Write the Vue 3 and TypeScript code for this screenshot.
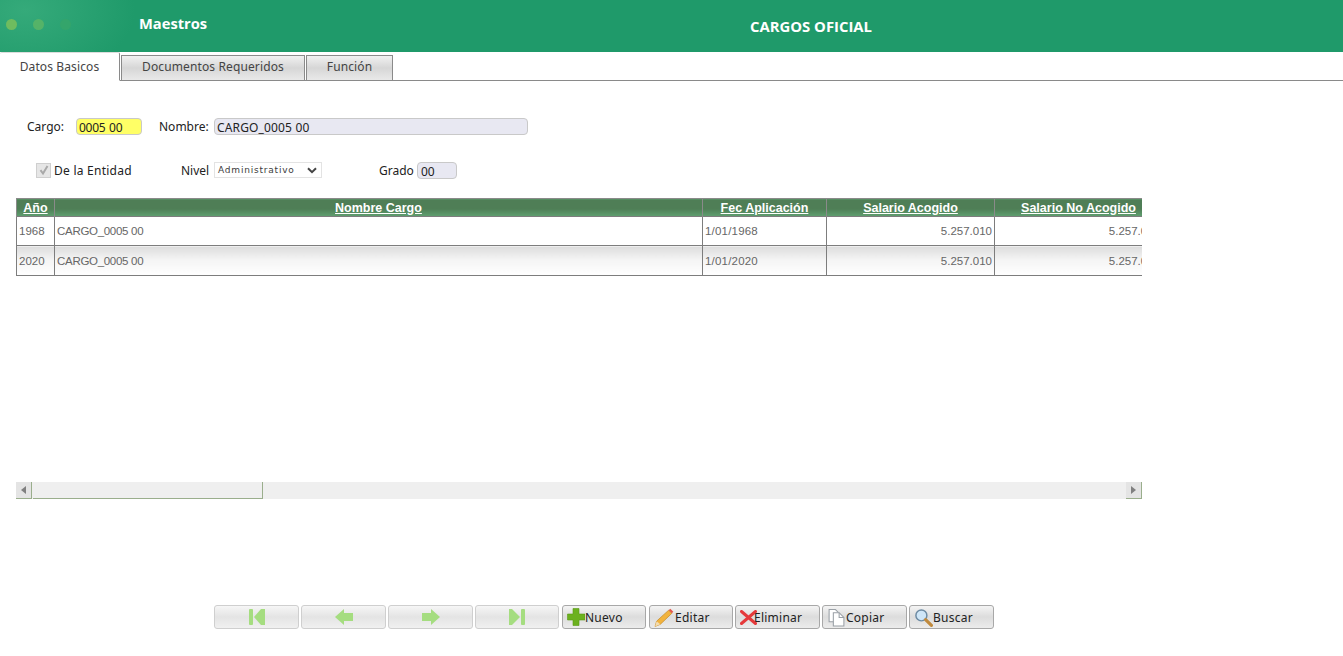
<script setup lang="ts">
interface Row { year: string; name: string; date: string; a: string; b: string }
const rows: Row[] = [
  { year: '1968', name: 'CARGO_0005 00', date: '1/01/1968', a: '5.257.010', b: '5.257.010' },
  { year: '2020', name: 'CARGO_0005 00', date: '1/01/2020', a: '5.257.010', b: '5.257.010' },
]
const heads = ['Año', 'Nombre Cargo', 'Fec Aplicación', 'Salario Acogido', 'Salario No Acogido']
const tabs = ['Datos Basicos', 'Documentos Requeridos', 'Función']
</script>

<template>
  <div class="page">
    <header class="top">
      <div class="glow">
        <span class="dot d1"></span><span class="dot d2"></span><span class="dot d3"></span>
      </div>
      <div class="section">Maestros</div>
      <div class="title">CARGOS OFICIAL</div>
    </header>

    <nav class="tabs">
      <div v-for="(t, i) in tabs" :key="t" class="tab" :class="['t' + i, { active: i === 0 }]">{{ t }}</div>
    </nav>

    <section class="row r1">
      <label class="l-cargo">Cargo:</label>
      <div class="field cargo">0005 00</div>
      <label class="l-nombre">Nombre:</label>
      <div class="field nombre">CARGO_0005 00</div>
    </section>

    <section class="row r2">
      <span class="check">
        <svg width="14" height="14" viewBox="0 0 14 14">
          <path d="M3.5 7.2 L6 10.5 L10.5 3" fill="none" stroke="#a9a9a9" stroke-width="2" />
        </svg>
      </span>
      <label class="l-ent">De la Entidad</label>
      <label class="l-nivel">Nivel</label>
      <div class="select">
        <span>Administrativo</span>
        <svg width="10" height="7" viewBox="0 0 10 7"><path d="M1 1.2 L5 5.2 L9 1.2" fill="none" stroke="#444" stroke-width="2" /></svg>
      </div>
      <label class="l-grado">Grado</label>
      <div class="field grado">00</div>
    </section>

    <section class="grid-wrap">
      <table class="grid">
        <colgroup>
          <col style="width:38px" /><col style="width:648px" /><col style="width:124px" /><col style="width:168px" /><col style="width:168px" />
        </colgroup>
        <thead>
          <tr><th v-for="h in heads" :key="h"><a>{{ h }}</a></th></tr>
        </thead>
        <tbody>
          <tr v-for="(r, i) in rows" :key="r.year" :class="{ alt: i === 1 }">
            <td>{{ r.year }}</td>
            <td class="name">{{ r.name }}</td>
            <td class="date">{{ r.date }}</td>
            <td class="num">{{ r.a }}</td>
            <td class="num">{{ r.b }}</td>
          </tr>
        </tbody>
      </table>
    </section>

    <div class="scrollbar">
      <span class="arrow left"><i></i></span>
      <span class="thumb"></span>
      <span class="arrow right"><i></i></span>
    </div>

    <footer class="toolbar">
      <button class="btn off w85"><svg width="18" height="18" viewBox="0 0 18 18"><rect x="1" y="1" width="4" height="16" rx="1" fill="#a5dd80"/><path d="M17 1 V17 H13 L6 9 L13 1Z" fill="#a5dd80"/></svg></button>
      <button class="btn off w85"><svg width="18" height="18" viewBox="0 0 18 18"><path d="M0 9 L9 1 V5 H18 V13 H9 V17Z" fill="#a5dd80"/></svg></button>
      <button class="btn off w85"><svg width="18" height="18" viewBox="0 0 18 18"><path d="M18 9 L9 1 V5 H0 V13 H9 V17Z" fill="#a5dd80"/></svg></button>
      <button class="btn off w84"><svg width="18" height="18" viewBox="0 0 18 18"><rect x="13" y="1" width="4" height="16" rx="1" fill="#a5dd80"/><path d="M1 1 V17 H4 L12 9 L4 1Z" fill="#a5dd80"/></svg></button>
      <button class="btn w84 g1"><svg width="18" height="18" viewBox="0 0 18 18"><path d="M6 0.5 H12 V6 H18 V12 H12 V17.5 H6 V12 H0.5 V6 H6Z" fill="#6cb11f" stroke="#5a9a16" stroke-width=".6"/></svg><span class="tx">Nuevo</span></button>
      <button class="btn w84 g2"><svg width="21" height="19" viewBox="0 0 20 18"><path d="M1 17.5 L2.5 12.5 L14 2 L17 5 L6 15.5Z" fill="#f2b33d" stroke="#c98a20" stroke-width=".7"/><path d="M14 2 L15.5 .6 L18.4 3.6 L17 5Z" fill="#e2574c"/><path d="M1 17.5 L2.5 12.5 L6 15.5Z" fill="#f3dcb0"/></svg><span class="tx">Editar</span></button>
      <button class="btn w85 g3"><svg class="x" width="17" height="15" viewBox="0 0 17 15"><path d="M1.5 1.5 L15.5 13.5 M15.5 1.5 L1.5 13.5" stroke="#e5393b" stroke-width="3" stroke-linecap="round"/></svg><span class="tx">Eliminar</span></button>
      <button class="btn w85 g3"><svg width="19" height="19" viewBox="0 0 17 18"><path d="M1.5 1.5 H7.5 L10 4 V13 H1.5Z" fill="#fff" stroke="#9aa0a6"/><path d="M5.5 4.5 H11 L15.5 9 V17 H5.5Z" fill="#fff" stroke="#9aa0a6"/><path d="M11 4.5 V9 H15.5" fill="none" stroke="#9aa0a6"/></svg><span class="tx">Copiar</span></button>
      <button class="btn w85 g3"><svg width="19" height="19" viewBox="0 0 18 18"><circle cx="7" cy="7" r="5.2" fill="#cfe6f7" stroke="#6d8ba3" stroke-width="1.4"/><path d="M11 11 L16.5 16.5" stroke="#c08a3e" stroke-width="3" stroke-linecap="round"/></svg><span class="tx">Buscar</span></button>
    </footer>
  </div>
</template>

<style>
html, body { margin: 0; background: #fff; }
</style>

<style scoped>
.page { height: 656px; overflow: hidden; font-family: "Noto Sans", "Open Sans", sans-serif; font-size: 12px; color: #222; background: #fff; }

.top { height: 52px; background: #1f9a6a; display: flex; align-items: center; color: #fff; position: relative; }
.glow { width: 139px; height: 52px; flex: none; display: flex; align-items: center; gap: 16px; padding: 0 0 4px 6px; box-sizing: border-box;
  background: radial-gradient(ellipse 110px 70px at 25px 10px, #35aa7a 0%, #1f9a6a 100%); }
.dot { width: 11px; height: 11px; border-radius: 50%; }
.d1 { background: #6fbc5f; }
.d2 { background: #55b368; }
.d3 { background: #34a56b; }
.section { width: 611px; flex: none; font-family: "Open Sans", sans-serif; font-weight: 700; font-size: 14.7px; padding-bottom: 7px; box-sizing: border-box; }
.title { font-family: "Open Sans", sans-serif; font-weight: 700; font-size: 14.85px; padding-bottom: 1px; }

.tabs { height: 29px; display: flex; box-sizing: border-box; border-bottom: 1px solid #8a8a8a; align-items: flex-end; gap: 1px; }
.tab { height: 26px; margin-bottom: -1px; box-sizing: border-box; text-align: center; line-height: 22px; color: #444; letter-spacing: .12px;
  border: 1px solid #8a8a8a; border-bottom-width: 1px;
  background: linear-gradient(#f1f1f1 0%, #d6d6d6 50%, #e9e9e9 100%); }
.t0 { width: 120px; }
.t1 { width: 184px; }
.t2 { width: 87px; }
.active { height: 29px; background: #fff; border: none; border-top: 1px solid #dcdcdc; border-right: 1px solid #8a8a8a; border-bottom: 1px solid #fff; line-height: 28px; border-radius: 2px 2px 0 0; }

.row { display: flex; align-items: center; }
.r1 { margin-top: 37px; height: 17px; }
.r2 { margin-top: 26px; height: 18px; }
.field { box-sizing: border-box; height: 17px; line-height: 16px; border: 1px solid #c9c9c9; border-radius: 4px; padding: 1px 0 0 3px; background: #e8e8f2; color: #222; font-family: "Noto Sans", sans-serif; }
.l-cargo { margin-left: 27px; width: 49px; }
.cargo { width: 66px; background: #ffff66; letter-spacing: -.3px; padding-left: 2px; word-spacing: 1px; }
.l-nombre { margin-left: 17px; width: 55px; }
.nombre { width: 314px; padding-left: 2px; letter-spacing: .15px; }
.check { width: 15px; height: 15px; margin-left: 36px; box-sizing: border-box; background: #e6e6e6; border: 1px solid #cfcfcf; display: flex; align-items: center; justify-content: center; }
.check svg { flex: none; }
.l-ent { margin-left: 3px; width: 127px; letter-spacing: .25px; }
.l-nivel { width: 33px; }
.select { width: 108px; height: 16px; box-sizing: border-box; border: 1px solid #e3e3e3; display: flex; align-items: center; justify-content: space-between; padding: 0 4px 0 3px; font-family: "DejaVu Sans", sans-serif; font-size: 9px; color: #3c3c3c; letter-spacing: .8px; }
.l-grado { margin-left: 57px; width: 38px; }
.grado { width: 40px; height: 17px; }

.grid-wrap { width: 1126px; margin: 19px 0 0 16px; overflow: hidden; height: 79px; }
.grid { border-collapse: collapse; table-layout: fixed; width: 1146px; }
.grid th { height: 17px; padding: 0; border: 1px solid #8a8a8a; border-bottom: none; color: #fff; font-family: "Liberation Sans", sans-serif; font-size: 12.5px; font-weight: 700; background: linear-gradient(#4f7e56 0%, #4f7e56 55%, #5fa070 100%); }
.grid th a { text-decoration: underline; }
.grid td { height: 29px; padding: 0 2px; box-sizing: border-box; border: 1px solid #7d7d7d; color: #666; font-family: "Liberation Sans", sans-serif; font-size: 11.5px; background: #fff; white-space: nowrap; overflow: hidden; }
.grid td.name { letter-spacing: -.3px; }
.grid td.date { letter-spacing: .2px; }
.grid .alt td { height: 30px; background: linear-gradient(#dcdcdc 0%, #f4f4f4 45%, #fff 100%); }
.grid td.num { text-align: right; }

.scrollbar { width: 1126px; height: 17px; margin: 205px 0 0 16px; background: #efefef; display: flex; position: relative; }
.thumb { width: 230px; box-sizing: border-box; border-right: 1px solid #9aae8c; border-bottom: 1px solid #9aae8c; margin-left: 1px; }
.arrow { width: 16px; height: 17px; box-sizing: border-box; display: flex; align-items: center; justify-content: center; background: #e4e4e4; border-right: 1px solid #9aae8c; border-bottom: 1px solid #9aae8c; }
.arrow.right { position: absolute; right: 0; top: 0; }
.arrow i { width: 0; height: 0; border-top: 4px solid transparent; border-bottom: 4px solid transparent; }
.left i { border-right: 5px solid #808080; }
.right i { border-left: 5px solid #808080; }

.toolbar { margin: 106px 0 0 214px; display: flex; gap: 2px; }
.btn { height: 24px; padding: 0 0 0 4px; box-sizing: border-box; border: 1px solid #a8a8a8; border-radius: 3px; display: flex; align-items: center; font-family: "Noto Sans", sans-serif; font-size: 12px; color: #222; background: linear-gradient(#f4f4f4 0%, #dcdcdc 50%, #ececec 100%); }
.btn svg { flex: none; }
.btn .tx { letter-spacing: .25px; }
.btn .x { margin-right: -3px; }
.off { justify-content: center; padding: 0; border-color: #cfcfcf; background: linear-gradient(#f6f6f6 0%, #e4e4e4 50%, #f0f0f0 100%); }
.w85 { width: 85px; }
.w84 { width: 84px; }
.g1 { margin-left: 1px; }
.g2 { margin-left: 1px; }
</style>
